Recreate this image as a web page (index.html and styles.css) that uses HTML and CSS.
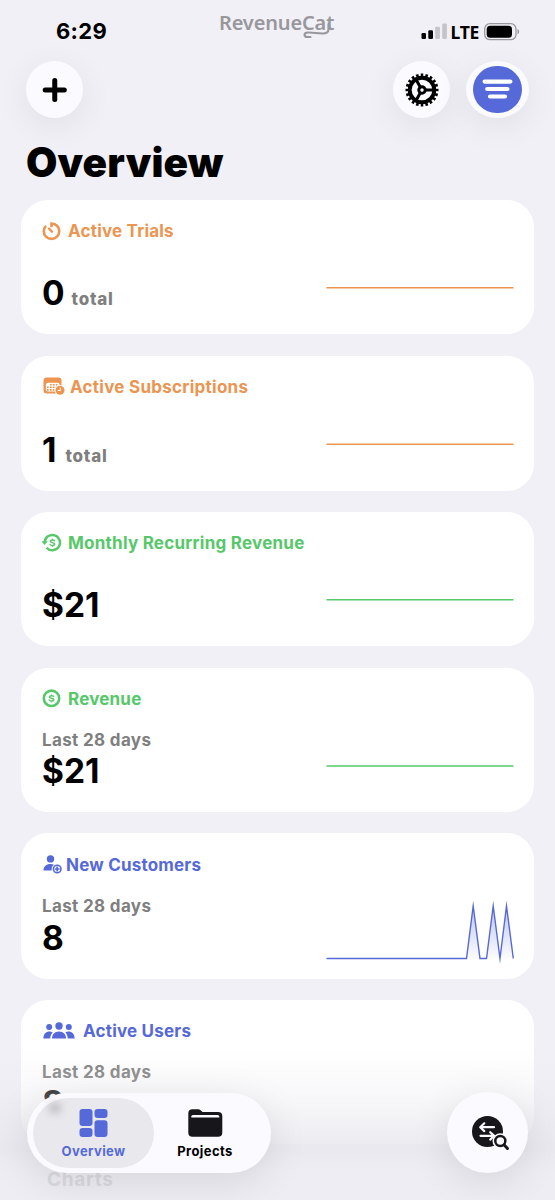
FILE: index.html
```html
<!DOCTYPE html>
<html lang="en">
<head>
<meta charset="utf-8">
<title>Overview</title>
<link rel="stylesheet" href="styles.css">
</head>
<body>
<div class="screen">
  <header class="status">
    <span class="time">6:29</span>
    <div class="brand">RevenueCat
      <svg class="swash" width="34" height="26" viewBox="0 0 34 26" fill="none" stroke="#97979c" stroke-width="2.100" stroke-linecap="round"><path d="M25.500 11V16.500Q25.300 20.600 19.500 20.500L5.500 19.500Q1.600 19.300 1.500 21.900Q1.600 24 4.200 24H7.500"/></svg>
    </div>
    <div class="indicators">
      <svg width="27" height="17" viewBox="0 0 27 17"><rect x="0.500" y="10" width="4.500" height="6" rx="1.300"/><rect x="7.300" y="7.200" width="4.700" height="8.800" rx="1.300"/><g fill="#c4c4c9"><rect x="14.200" y="3.800" width="4.700" height="12.200" rx="1.300"/><rect x="21.200" y="0.500" width="4.700" height="15.500" rx="1.300"/></g></svg>
      <span class="lte">LTE</span>
      <svg class="battery" width="36" height="18" viewBox="0 0 36 18"><rect x="0.700" y="0.700" width="31.300" height="16" rx="5.200" fill="none" stroke="#98989d" stroke-width="1.300"/><rect x="2.700" y="2.700" width="25.300" height="12" rx="3.500"/><path d="M33.500 6Q35.200 6.800 35.200 8.700T33.500 11.400Z" fill="#98989d"/></svg>
    </div>
  </header>

  <nav class="toolbar">
    <button class="round" aria-label="Add"><svg width="26" height="26" viewBox="0 0 26 26" stroke="#000" stroke-width="5" stroke-linecap="round"><path d="M3.200 13H22.300M12.750 3.500V22.500"/></svg></button>
    <div class="tools">
      <button class="round" aria-label="Settings">
        <svg width="34" height="34" viewBox="-17 -17 34 34" fill="none" stroke="#000">
          <circle r="14.600" stroke-width="3.800" pathLength="100" stroke-dasharray="2.700 2.300" stroke-dashoffset="1.350"/>
          <circle r="12.300" stroke-width="3.900"/>
          <circle r="3.200" stroke-width="3"/>
          <path stroke-width="3" d="M3.500 0H12M-1.750-3.030L-6-10.390M-1.750 3.030L-6 10.390"/>
        </svg>
      </button>
      <button class="round wide" aria-label="Filter"><span class="disc"><svg width="31" height="21" viewBox="0 0 31 21" stroke="#fff" stroke-width="4.200" stroke-linecap="round"><path d="M2.600 2.600H28.400M5.200 10H25.400M8 17.500H23"/></svg></span></button>
    </div>
  </nav>

  <h1>Overview</h1>

  <main class="cards">
    <section class="card orange">
      <div class="info">
        <h2><svg width="19" height="19" viewBox="0 0 19 19" fill="none" stroke="currentColor" stroke-width="2.600"><path d="M9.500 5.300V1.500C14 1.500 17.200 5 17.200 9.200S13.800 16.900 9.500 16.900 1.800 13.500 1.800 9.200C1.800 7 2.600 5.200 4 3.900"/><path d="M7 6.700L10 9.700" stroke-width="2.400" stroke-linecap="round"/></svg><span>Active Trials</span></h2>
        <p class="value">0<small>total</small></p>
      </div>
      <svg class="chart" width="188" height="92" viewBox="0 0 188 92"><path d="M0.500 66.800H187.500"/></svg>
    </section>

    <section class="card orange second">
      <div class="info">
        <h2 class="subs"><svg width="22" height="19" viewBox="0 0 22 19"><path fill="currentColor" d="M3.500 .5H15.500Q18.500 .5 18.500 3.500V9.500C16 9.700 12.700 11.500 13.300 16.500H3.500Q.5 16.500 .5 13.500V3.500Q.5 .5 3.500 .5Z"/><path d="M2.900 8Q2.900 5.800 5 5.800H14.600Q16.700 5.800 16.700 8V9.700C14.500 10 12.300 12 12.200 14.500H5Q2.900 14.500 2.900 12.500Z" fill="#fff"/><g stroke="currentColor" stroke-width="1.600" stroke-dasharray="1.700 1.250"><path d="M6.900 7.700H15.500M4 10.300H14M4 12.900H11.500"/></g><circle cx="17" cy="13.200" r="5.300" fill="#fff"/><circle cx="17" cy="13.200" r="4.500" fill="currentColor"/><path d="M17.300 10.600V13.500H14.700" fill="none" stroke="#fff" stroke-width="1"/></svg><span>Active Subscriptions</span></h2>
        <p class="value">1<small>total</small></p>
      </div>
      <svg class="chart" width="188" height="92" viewBox="0 0 188 92"><path d="M0.500 67.300H187.500"/></svg>
    </section>

    <section class="card green">
      <div class="info">
        <h2 class="mrr"><svg width="20" height="20" viewBox="0 0 20 20" fill="none" stroke="currentColor"><path stroke-width="2.500" d="M2.600 9.200A7.700 7.700 0 1 1 4.500 14.700"/><path fill="currentColor" stroke="none" d="M-.8 8.200H5.800L2.700 12Z"/><path stroke-width="1.500" stroke-linecap="round" d="M12.500 7.800C12 6.900 8.500 6.700 8.300 8.300 8.300 10 12.600 9.200 12.700 11.100 12.500 13 8.700 12.600 8.100 11.500M10.400 6.300V7M10.400 12.500V13.200"/></svg><span>Monthly Recurring Revenue</span></h2>
        <p class="value">$21</p>
      </div>
      <svg class="chart" width="188" height="92" viewBox="0 0 188 92"><path d="M0.500 66.800H187.500"/></svg>
    </section>

    <section class="card green tall">
      <div class="info">
        <h2><svg width="19" height="19" viewBox="0 0 19 19" fill="none" stroke="currentColor"><circle cx="9.500" cy="9.300" r="7.700" stroke-width="2.600"/><path stroke-width="1.500" stroke-linecap="round" d="M11.600 7.400C11 6.400 7.500 6.300 7.400 7.900 7.400 9.600 11.700 8.800 11.800 10.700 11.600 12.600 7.800 12.200 7.200 11M9.500 5.900V6.600M9.500 12.100V12.800"/></svg><span>Revenue</span></h2>
        <p class="label">Last 28 days</p>
        <p class="value">$21</p>
      </div>
      <svg class="chart" width="188" height="102" viewBox="0 0 188 102"><path d="M0.500 77H187.500"/></svg>
    </section>

    <section class="card blue tall customers">
      <div class="info">
        <h2><svg width="20" height="20" viewBox="0 0 20 20" fill="currentColor"><circle cx="8.500" cy="3.900" r="3.700"/><path d="M1.500 15.500C1.500 11.500 4.300 9 8.300 9Q10.500 9 12 9.800C10.100 11.200 9.400 12.900 9.700 15.500Z"/><circle cx="15.200" cy="14" r="3.800" fill="#fff" stroke="currentColor" stroke-width="1.600"/><path d="M15.200 11.600V16.400M12.800 14H17.600" stroke="currentColor" stroke-width="1.700"/></svg><span>New Customers</span></h2>
        <p class="label">Last 28 days</p>
        <p class="value">8</p>
      </div>
      <svg class="chart" width="188" height="104" viewBox="0 0 188 104">
        <defs><linearGradient id="fade" x1="0" x2="0" y1="0" y2="1"><stop offset="0" stop-color="#5669d8" stop-opacity=".38"/><stop offset="1" stop-color="#5669d8" stop-opacity=".02"/></linearGradient></defs>
        <path class="area" fill="url(#fade)" d="M140.500 104.500L147.200 52L154 104.500ZM160.500 104.500L167.200 52L174 104.500L180.500 52L187.300 104.500Z"/>
        <path d="M0.500 104.500H140.500L147.200 52L154 104.500H160.500L167.200 52L174 104.500L180.500 52L187.300 104.500"/>
      </svg>
    </section>

    <section class="card blue tall users">
      <div class="info">
        <h2><svg width="32" height="18" viewBox="0 0 32 18" fill="currentColor"><circle cx="16" cy="4" r="3.700"/><path d="M9 16.500C9 12.500 11.500 9.500 16 9.500S23 12.500 23 16.500Z"/><circle cx="6.200" cy="5" r="3"/><circle cx="25.800" cy="5" r="3"/><path d="M.4 16.500C.4 12.200 3 9.600 6.500 9.600Q8.300 9.600 9.700 10.300C8.300 12 7.400 13.800 7.200 16.500ZM31.600 16.500C31.600 12.200 29 9.600 25.500 9.600Q23.700 9.600 22.300 10.300C23.700 12 24.600 13.800 24.800 16.500Z"/></svg><span>Active Users</span></h2>
        <p class="label">Last 28 days</p>
        <p class="value">8</p>
      </div>
    </section>
    <h3>Charts</h3>
  </main>

  <div class="veil"></div>
  <footer class="dock">
    <div class="tabs">
      <a class="tab active">
        <i class="smudge"></i>
        <svg width="29" height="28" viewBox="0 0 29 28" fill="currentColor"><rect x="0.500" width="13" height="17" rx="3"/><rect x="15.500" width="13" height="9" rx="3"/><rect x="0.500" y="19" width="13" height="9" rx="3"/><rect x="15.500" y="11.300" width="13" height="16.700" rx="3"/></svg>
        <span>Overview</span>
      </a>
      <a class="tab">
        <svg width="35" height="28" viewBox="0 0 35 28" fill="#17171b"><path d="M4.500.300H10.500Q12 .3 13.500 2L14.500 3H30Q34.300 3 34.300 7.200V23.500Q34.300 27.800 30 27.800H4.500Q.3 27.800 .3 23.500V4.500Q.3.300 4.500.300Z"/><path d="M3.300 8.600V7.500Q3.300 5.900 5 5.900H29.700Q31.300 5.900 31.300 7.500V8.600Z" fill="#fafaff"/></svg>
        <span>Projects</span>
      </a>
    </div>
    <button class="search" aria-label="Search transactions"><svg width="40" height="36" viewBox="0 0 40 36" fill="none" stroke-linecap="round" stroke-linejoin="round"><circle cx="16.500" cy="16.500" r="15.500" fill="#17171b"/><g stroke="#fafaff" stroke-width="2.200"><path d="M23 12.200H9.500M13.300 8.300L9.200 12.200L13.300 16.100M9.500 20.800H23M19.200 17.200L23.200 20.800L19.200 24.600"/></g><circle cx="29.300" cy="26" r="7.800" fill="#fafaff"/><circle cx="29.300" cy="26" r="5" stroke="#17171b" stroke-width="2.500"/><path d="M33 29.800L36.500 33.500" stroke="#17171b" stroke-width="3"/></svg></button>
  </footer>
</div>
</body>
</html>
```
FILE: styles.css
```css
* { box-sizing: border-box; }
body, h1, h2, h3, p { margin: 0; }
body { font-family: Inter, "Liberation Sans", sans-serif; color: #000; }
button { border: 0; padding: 0; }
svg { display: block; flex: none; }

.screen {
  position: relative;
  width: 555px;
  height: 1200px;
  overflow: hidden;
  background: #f1f0f6;
}

.status {
  display: grid;
  grid-template-columns: 219px 1fr auto;
  height: 61px;
  padding-right: 35px;
}
.time {
  padding: 17px 0 0 56px;
  font-size: 22px;
  line-height: 28px;
  font-weight: 700;
  letter-spacing: 0.3px;
}
.brand {
  position: relative;
  justify-self: start;
  padding-top: 9px;
  font: 600 20px/28px "Noto Sans", sans-serif;
  letter-spacing: -0.15px;
  color: #97979c;
}
.swash { position: absolute; left: 84px; top: 13px; }
.indicators { display: flex; align-items: flex-start; padding-top: 23px; }
.lte {
  margin: -1px 5px 0 3px;
  font: 700 17.5px/20px "Noto Sans", sans-serif;
  letter-spacing: -0.3px;
}

.toolbar {
  display: flex;
  justify-content: space-between;
  padding: 0 26px;
}
.tools { display: flex; gap: 16px; }
.round {
  display: grid;
  place-items: center;
  width: 57px;
  height: 57px;
  border-radius: 50%;
  background: #fbfaff;
  box-shadow: 0 8px 34px rgba(0, 0, 0, 0.07);
}
.wide { width: 63px; }
.disc {
  display: grid;
  place-items: center;
  width: 49px;
  height: 47px;
  border-radius: 24px;
  background: #5669d8;
}

h1 {
  height: 82px;
  padding: 21px 0 0 26px;
  font-size: 40.5px;
  line-height: 48px;
  font-weight: 900;
  letter-spacing: 0.15px;
}

.cards {
  display: flex;
  flex-direction: column;
  gap: 21.5px;
  padding: 0 21px;
}
.card {
  display: flex;
  flex: none;
  justify-content: space-between;
  height: 134px;
  padding: 21px 20px 0 21px;
  border-radius: 27px;
  background: #fff;
}
.second { height: 135px; }
.tall { height: 144px; }
.customers { height: 146px; }
.orange { color: #ec9552; }
.green { color: #57c86a; }
.blue { color: #5669d8; }
.info h2 {
  display: flex;
  align-items: center;
  gap: 7px;
  height: 20px;
  font-size: 17px;
  font-weight: 730;
  letter-spacing: 0.2px;
  white-space: nowrap;
}
.subs svg { margin-left: 1px; }
.info .subs { gap: 5px; letter-spacing: 0.27px; }
.info .mrr { gap: 6px; letter-spacing: 0.24px; }
.customers h2 { gap: 4px; }
.users { margin-top: -1px; }
.users h2 { gap: 8px; padding-left: 1px; }
.value {
  display: flex;
  align-items: baseline;
  gap: 7px;
  margin-top: 32px;
  font-size: 33.5px;
  line-height: 40px;
  font-weight: 650;
  color: #000;
}
.second .value { gap: 9px; margin-top: 33px; }
.value small {
  font-size: 17px;
  line-height: 20px;
  font-weight: 800;
  letter-spacing: 0.75px;
  color: #7f7f7f;
}
.label {
  margin-top: 21px;
  font-size: 17px;
  line-height: 20px;
  font-weight: 650;
  letter-spacing: 0.35px;
  color: #7f7f7f;
}
.customers h2 { padding-top: 1px; height: 21px; }
.label + .value { margin-top: 1.5px; }
.customers .value { margin-top: 2px; }
.chart {
  overflow: visible;
  fill: none;
  stroke: currentColor;
  stroke-width: 1.4;
  stroke-miterlimit: 10;
}
.area { stroke: none; }
h3 {
  padding: 3px 0 0 26px;
  font-size: 19px;
  line-height: 24px;
  font-weight: 750;
  letter-spacing: 0.7px;
  color: #cfcfd4;
}

.veil {
  position: absolute;
  inset: 1050px 0 0;
  background: linear-gradient(rgba(233, 232, 238, 0), rgba(233, 232, 238, 0.35) 50px, rgba(233, 232, 238, 0.9) 100px, rgba(232, 232, 237, 0.4) 120px);
}
.dock {
  position: absolute;
  inset: auto 27px 27px;
  display: flex;
  justify-content: space-between;
  align-items: flex-end;
}
.tabs {
  display: flex;
  width: 244px;
  height: 80px;
  padding: 5px 6px;
  border-radius: 40px;
  background: #fbfaff;
  box-shadow: 0 8px 40px rgba(0, 0, 0, 0.1);
}
.tab {
  position: relative;
  display: flex;
  flex-direction: column;
  align-items: center;
  gap: 4px;
  width: 121px;
  height: 70px;
  padding-top: 11px;
  border-radius: 35px;
  font-size: 13px;
  line-height: 20px;
  font-weight: 700;
  letter-spacing: 0.4px;
}
.tab + .tab { width: 102px; }
.active { color: #5669d8; background: #e9e9ed; }
.smudge {
  position: absolute;
  left: 16px;
  top: 5px;
  width: 12px;
  height: 10px;
  border-radius: 50%;
  background: rgba(60, 60, 65, 0.3);
  filter: blur(4px);
}
.search {
  display: grid;
  place-items: center;
  width: 81px;
  height: 81px;
  padding-left: 6px;
  border-radius: 50%;
  background: #fbfaff;
  box-shadow: 0 8px 40px rgba(0, 0, 0, 0.1);
}
```
